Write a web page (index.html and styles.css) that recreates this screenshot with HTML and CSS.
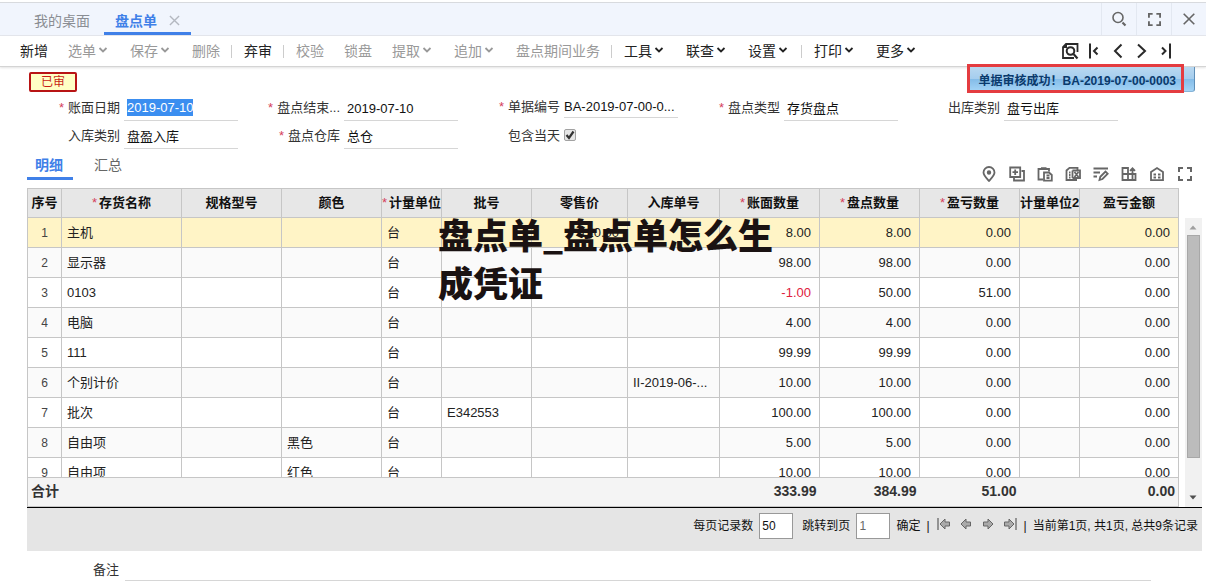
FILE: index.html
```html
<!DOCTYPE html>
<html lang="zh-CN">
<head>
<meta charset="utf-8">
<title>盘点单</title>
<link rel="stylesheet" href="styles.css">
</head>
<body>
<svg class="defs" aria-hidden="true">
  <symbol id="chev" viewBox="0 0 10 8"><path d="M1.500 2l3.500 3.500L8.500 2" fill="none" stroke="currentColor" stroke-width="1.800"/></symbol>
  <symbol id="corners" viewBox="0 0 14 14"><path d="M1 5V1h4M9 1h4v4M13 9v4H9M5 13H1V9" fill="none" stroke="currentColor" stroke-width="2"/></symbol>
</svg>

<header class="tabbar">
  <nav class="tabs">
    <button class="tab">我的桌面</button>
    <button class="tab active">盘点单
      <svg class="tab-close" viewBox="0 0 12 12"><path d="M1 1l10 10M11 1L1 11" fill="none" stroke="currentColor" stroke-width="1.500"/></svg>
    </button>
  </nav>
  <div class="window-tools">
    <button class="wbtn" aria-label="搜索"><svg width="16" height="16" viewBox="0 0 16 16"><circle cx="7" cy="6.500" r="5" fill="none" stroke="currentColor" stroke-width="1.600"/><path d="M11.500 11.500l3 3" stroke="currentColor" stroke-width="2.200"/></svg></button>
    <button class="wbtn" aria-label="全屏"><svg width="13" height="13"><use href="#corners"/></svg></button>
    <button class="wbtn" aria-label="关闭"><svg width="12" height="12" viewBox="0 0 12 12"><path d="M.7.7l10.600 10.600M11.300.7L.7 11.300" fill="none" stroke="currentColor" stroke-width="1.600"/></svg></button>
  </div>
</header>

<div class="toolbar">
  <div class="actions">
    <button class="act">新增</button>
    <button class="act off">选单<svg class="chev"><use href="#chev"/></svg></button>
    <button class="act off">保存<svg class="chev"><use href="#chev"/></svg></button>
    <button class="act off">删除</button>
    <span class="sep"></span>
    <button class="act">弃审</button>
    <span class="sep"></span>
    <button class="act off">校验</button>
    <button class="act off">锁盘</button>
    <button class="act off">提取<svg class="chev"><use href="#chev"/></svg></button>
    <button class="act off">追加<svg class="chev"><use href="#chev"/></svg></button>
    <button class="act off">盘点期间业务</button>
    <span class="sep"></span>
    <button class="act">工具<svg class="chev"><use href="#chev"/></svg></button>
    <button class="act">联查<svg class="chev"><use href="#chev"/></svg></button>
    <button class="act">设置<svg class="chev"><use href="#chev"/></svg></button>
    <span class="sep"></span>
    <button class="act">打印<svg class="chev"><use href="#chev"/></svg></button>
    <button class="act">更多<svg class="chev"><use href="#chev"/></svg></button>
  </div>
  <div class="record-nav">
    <button aria-label="查找单据"><svg viewBox="0 0 18 18"><path d="M16.500 10V2H5L2 5v11h11" fill="none" stroke="currentColor" stroke-width="1.800"/><path d="M1.500 6L6 1.500V6z" fill="currentColor"/><circle cx="9.500" cy="9" r="3.800" fill="none" stroke="currentColor" stroke-width="2"/><path d="M12.500 12l4 4.500" stroke="currentColor" stroke-width="2.200"/></svg></button>
    <button aria-label="第一张"><svg viewBox="0 0 18 18"><path d="M5 1.500v15M12.500 5.500L9 9l3.500 3.500" fill="none" stroke="currentColor" stroke-width="2"/></svg></button>
    <button aria-label="上一张"><svg viewBox="0 0 18 18"><path d="M12.500 2.500L6 9l6.500 6.500" fill="none" stroke="currentColor" stroke-width="2"/></svg></button>
    <button aria-label="下一张"><svg viewBox="0 0 18 18"><path d="M5 2.500L12 9l-7 6.500" fill="none" stroke="currentColor" stroke-width="2"/></svg></button>
    <button aria-label="最后一张"><svg viewBox="0 0 18 18"><path d="M13 1.500v15M5 5.500L8.500 9L5 12.500" fill="none" stroke="currentColor" stroke-width="2"/></svg></button>
  </div>
</div>

<main>
  <div class="status-row">
    <span class="badge">已审</span>
    <div class="toast-wrap"><div class="toast" role="status">单据审核成功<span class="mark">！</span>BA-2019-07-00-0003</div></div>
  </div>

  <form class="fields">
    <div class="field"><label for="f1"><i>*</i>账面日期</label><span class="line"><input id="f1" class="selected" value="2019-07-10"></span></div>
    <div class="field"><label for="f2"><i>*</i>盘点结束...</label><span class="line"><input id="f2" value="2019-07-10"></span></div>
    <div class="field raised"><label for="f3"><i>*</i>单据编号</label><span class="line flush"><input id="f3" value="BA-2019-07-00-0..."></span></div>
    <div class="field"><label for="f4"><i>*</i>盘点类型</label><span class="line"><input id="f4" value="存货盘点"></span></div>
    <div class="field"><label for="f5">出库类别</label><span class="line"><input id="f5" value="盘亏出库"></span></div>
    <div class="field"><label for="f6">入库类别</label><span class="line"><input id="f6" value="盘盈入库"></span></div>
    <div class="field"><label for="f7"><i>*</i>盘点仓库</label><span class="line"><input id="f7" value="总仓"></span></div>
    <div class="field"><label for="f8">包含当天</label><span class="check"><input id="f8" type="checkbox" checked><svg viewBox="0 0 12 12"><path d="M2.500 6l2.500 3 4.500-6.500" fill="none" stroke="#333" stroke-width="2.200"/></svg></span></div>
  </form>

  <div class="detail-bar">
    <nav class="subtabs">
      <button class="subtab active">明细</button>
      <button class="subtab">汇总</button>
    </nav>
    <div class="grid-tools">
      <button aria-label="定位"><svg viewBox="0 0 16 16"><path d="M8 15C5 11.500 2.500 9.200 2.500 6.500a5.500 5.500 0 0 1 11 0C13.500 9.200 11 11.500 8 15z"/><circle cx="8" cy="6.500" r="1.300" fill="currentColor"/></svg></button>
      <button aria-label="插行"><svg viewBox="0 0 16 16"><path d="M1.200 1.500h10v9.500h-10zM6.200 3.500v5.500M3.500 6.200H9"/><path d="M12.500 5H15v9.500H5V12"/></svg></button>
      <button aria-label="粘贴"><svg viewBox="0 0 16 16"><path d="M6 13.500H1.500V3H12v2.500M4 2.200h5.500"/><path d="M7 6.500h5l2.800 2.500v5.700H7zM9.500 9.500h3M9.500 12h3"/></svg></button>
      <button aria-label="删行"><svg viewBox="0 0 16 16"><path d="M12 14H1.500V4.500l3-2.700H12.500V4M4 6.500h1.500M4 9h1.500M4 11.500h1.500M7.500 4.500v7.500"/><path d="M7.500 4.500H15V12H7.500M9.500 6l4 5M13.500 6l-4 5"/></svg></button>
      <button aria-label="批改"><svg viewBox="0 0 16 16"><path d="M.5 2.500H15M.5 6.500H7M.5 10.500H4"/><path d="M6.500 14l.8-3.200L12.500 5.500l2.200 2.200-5.200 5.300z"/></svg></button>
      <button aria-label="栏目设置"><svg viewBox="0 0 16 16"><path d="M1.500 2H7v6H1.500zM1.500 8v6h13V8H7v6M11.500 14V2.500M9 4.800l2.500-2.500L14 4.800"/></svg></button>
      <button aria-label="仓库"><svg viewBox="0 0 16 16"><path d="M2 14.200V6l6-4 6 4v8.200z"/><path d="M4.500 8.500H7M9 8.500h2.500M4.500 11.500H7M9 11.500h2.500"/></svg></button>
      <button aria-label="最大化"><svg viewBox="-1 -1 16 16"><use href="#corners" width="14" height="14"/></svg></button>
    </div>
  </div>

  <section class="grid-box">
    <div class="grid-row">
      <div class="tables">
        <div class="viewport">
          <table class="grid">
            <colgroup><col class="w34"><col class="w120"><col class="w100"><col class="w100"><col class="w60"><col class="w90"><col class="w96"><col class="w92"><col class="w100"><col class="w100"><col class="w100"><col class="w60"><col class="w99"></colgroup>
            <thead><tr><th>序号</th><th><i>*</i>存货名称</th><th>规格型号</th><th>颜色</th><th><i>*</i>计量单位</th><th>批号</th><th>零售价</th><th>入库单号</th><th><i>*</i>账面数量</th><th><i>*</i>盘点数量</th><th><i>*</i>盈亏数量</th><th>计量单位2</th><th>盈亏金额</th></tr></thead>
            <tbody>
              <tr class="current"><td>1</td><td>主机</td><td></td><td></td><td>台</td><td></td><td class="n">120.00</td><td></td><td class="n">8.00</td><td class="n">8.00</td><td class="n">0.00</td><td></td><td class="n">0.00</td></tr>
              <tr><td>2</td><td>显示器</td><td></td><td></td><td>台</td><td></td><td></td><td></td><td class="n">98.00</td><td class="n">98.00</td><td class="n">0.00</td><td></td><td class="n">0.00</td></tr>
              <tr><td>3</td><td>0103</td><td></td><td></td><td>台</td><td></td><td></td><td></td><td class="n neg">-1.00</td><td class="n">50.00</td><td class="n">51.00</td><td></td><td class="n">0.00</td></tr>
              <tr><td>4</td><td>电脑</td><td></td><td></td><td>台</td><td></td><td></td><td></td><td class="n">4.00</td><td class="n">4.00</td><td class="n">0.00</td><td></td><td class="n">0.00</td></tr>
              <tr><td>5</td><td>111</td><td></td><td></td><td>台</td><td></td><td></td><td></td><td class="n">99.99</td><td class="n">99.99</td><td class="n">0.00</td><td></td><td class="n">0.00</td></tr>
              <tr><td>6</td><td>个别计价</td><td></td><td></td><td>台</td><td></td><td></td><td>II-2019-06-...</td><td class="n">10.00</td><td class="n">10.00</td><td class="n">0.00</td><td></td><td class="n">0.00</td></tr>
              <tr><td>7</td><td>批次</td><td></td><td></td><td>台</td><td>E342553</td><td></td><td></td><td class="n">100.00</td><td class="n">100.00</td><td class="n">0.00</td><td></td><td class="n">0.00</td></tr>
              <tr><td>8</td><td>自由项</td><td></td><td>黑色</td><td>台</td><td></td><td></td><td></td><td class="n">5.00</td><td class="n">5.00</td><td class="n">0.00</td><td></td><td class="n">0.00</td></tr>
              <tr><td>9</td><td>自由项</td><td></td><td>红色</td><td>台</td><td></td><td></td><td></td><td class="n">10.00</td><td class="n">10.00</td><td class="n">0.00</td><td></td><td class="n">0.00</td></tr>
            </tbody>
          </table>
        </div>
        <table class="totals">
          <colgroup><col class="w34"><col class="w120"><col class="w100"><col class="w100"><col class="w60"><col class="w90"><col class="w96"><col class="w92"><col class="w100"><col class="w100"><col class="w100"><col class="w60"><col class="w99"></colgroup>
          <tbody><tr><th colspan="8">合计</th><td>333.99</td><td>384.99</td><td>51.00</td><td></td><td>0.00</td></tr></tbody>
        </table>
      </div>
      <div class="scrollbar">
        <svg viewBox="0 0 16 16"><path d="M4.500 11L8 7l3.500 4z" fill="#a0a0a0"/></svg>
        <div class="thumb"></div>
        <svg viewBox="0 0 16 16"><path d="M4.500 5L8 9l3.500-4z" fill="#505050"/></svg>
      </div>
    </div>
    <div class="watermark">盘点单_盘点单怎么生成凭证</div>

    <div class="pager">
      <label for="size">每页记录数</label><input id="size" value="50">
      <label for="page" class="jump">跳转到页</label><input id="page" class="dim" value="1">
      <button class="ok">确定</button><span class="bar">|</span>
      <button class="arrow" aria-label="首页"><svg viewBox="0 0 16 14"><path d="M2 1v12" stroke="#777" stroke-width="1.500"/><path d="M4 7l5-5v3h4.500v4H9v3z" fill="#aaa" stroke="#666"/></svg></button>
      <button class="arrow" aria-label="上一页"><svg viewBox="0 0 16 14"><path d="M3 7l5-5v3h4.500v4H8v3z" fill="#aaa" stroke="#666"/></svg></button>
      <button class="arrow" aria-label="下一页"><svg viewBox="0 0 16 14"><path d="M13 7L8 2v3H3.500v4H8v3z" fill="#aaa" stroke="#666"/></svg></button>
      <button class="arrow" aria-label="末页"><svg viewBox="0 0 16 14"><path d="M14 1v12" stroke="#777" stroke-width="1.500"/><path d="M12 7L7 2v3H2.500v4H7v3z" fill="#aaa" stroke="#666"/></svg></button>
      <span class="bar">|</span><span>当前第1页, 共1页, 总共9条记录</span>
    </div>
  </section>

  <div class="remark"><label for="memo">备注</label><input id="memo"></div>
</main>
</body>
</html>
```
FILE: styles.css
```css
* { box-sizing: border-box; }
body {
  margin: 0;
  background: #fff;
  color: #333;
  font: 13px/20px "Liberation Sans", "Noto Sans CJK SC", sans-serif;
  overflow: hidden;
}
button, input { font: inherit; color: inherit; background: none; border: 0; padding: 0; margin: 0; outline: 0; }
svg { display: block; flex: none; }
i { font-style: normal; color: #d4405c; }
.defs { position: absolute; width: 0; height: 0; }

.tabbar {
  display: flex;
  justify-content: space-between;
  margin-top: 2px;
  height: 34px;
  background: #f1f5fd;
  border-top: 1px solid #d8dade;
  border-bottom: 1px solid #e3e6ec;
}
.tabs { display: flex; padding-left: 20px; font-size: 14px; }
.tab { color: #8a8d93; padding: 6px 14px 0; border-bottom: 3px solid transparent; }
.tab.active {
  display: flex;
  align-items: center;
  gap: 12px;
  padding: 6px 11px 0;
  color: #4080e8;
  font-weight: bold;
  border-bottom-color: #4080e8;
}
.tab-close { width: 11px; height: 11px; color: #b4b8c0; }
.window-tools { display: flex; color: #666; }
.wbtn { width: 35px; display: grid; place-items: center; border-left: 1px solid #e3e8f1; }

.toolbar {
  display: flex;
  justify-content: space-between;
  align-items: center;
  height: 31px;
  padding: 0 31px 0 10px;
  border-bottom: 1px solid #d4d4d4;
  box-shadow: 0 1px 2px #e4e4e4;
}
.actions { display: flex; align-items: center; font-size: 14px; white-space: nowrap; }
.act { display: flex; align-items: center; padding: 0 10px; color: #222; }
.act.off { color: #999; }
.chev { width: 12px; height: 8px; margin: 0 1px; margin-bottom: 2px; }
.sep { width: 2px; height: 13px; margin: 0 1px; border-left: 1px solid #ccc; }
.record-nav { display: flex; gap: 6px; color: #2a2a2a; }
.record-nav svg { width: 18px; height: 18px; }

.status-row { display: flex; justify-content: space-between; height: 26px; padding: 0 11px 0 29px; }
.badge {
  width: 48px;
  height: 20px;
  margin-top: 5px;
  border: 2px solid #b81414;
  border-radius: 2px;
  background: #ffffc4;
  color: #c81e14;
  font-size: 12px;
  line-height: 16px;
  text-align: center;
}
.toast-wrap { position: relative; }
.toast {
  height: 25px;
  padding: 0 18px 0 12px;
  border-radius: 0 0 3px 3px;
  border-right: 1px solid #5f8fb8;
  border-bottom: 1px solid #86b4d8;
  background: linear-gradient(#b9d8f0, #a4cdee 50%, #84bce8 51%, #a4d4f6);
  color: #0a3a6c;
  font-weight: bold;
  font-size: 12px;
  line-height: 26px;
}
.mark { font-family: "Noto Sans CJK TC", sans-serif; }
.toast-wrap::after { content: ""; position: absolute; inset: -3px 11px 0 0; border: 3px solid #e43c40; }

.fields {
  display: grid;
  grid-template-columns: repeat(5, minmax(0, 1fr));
  padding: 0 88px 0 18px;
}
.field { display: flex; align-items: center; gap: 4px; height: 28px; white-space: nowrap; }
.field label { flex: 1; text-align: right; padding-top: 2px; }
.field i { margin-right: 4px; }
.raised { padding-bottom: 3px; }
.line {
  width: 114px;
  height: 100%;
  padding: 6px 3px 0;
  border-bottom: 1px solid #d6d6d6;
  color: #111;
}
.line input { display: block; width: 100%; height: 20px; }
.line.flush { padding: 4px 0 0; }
.line .selected { width: 66px; height: 17px; background: #3b8ef0; color: #fff; }
.check { position: relative; width: 114px; }
.check input {
  appearance: none;
  display: block;
  width: 12px;
  height: 12px;
  border: 1px solid #a2a2a2;
  border-radius: 2px;
  background: #e6e6e6;
}
.check svg { position: absolute; left: 0; top: 0; width: 12px; height: 12px; pointer-events: none; }

.detail-bar { display: flex; justify-content: space-between; height: 31px; padding: 0 13px 0 27px; }
.subtabs { display: flex; gap: 13px; font-size: 14px; }
.subtab { padding: 4px 8px 0; border-bottom: 3px solid transparent; color: #666; }
.subtab.active { padding: 4px 10px 0 8px; color: #4080e8; font-weight: bold; border-bottom-color: #4080e8; }
.grid-tools { display: flex; gap: 12px; padding-top: 17px; color: #666; }
.grid-tools svg { width: 16px; height: 16px; fill: none; stroke: currentColor; stroke-width: 1.8; }

.grid-box { position: relative; margin: 8px 4px 0 27px; }
.grid-row { display: flex; height: 320px; border-bottom: 1px solid #000; }
.tables { flex: 1; min-width: 0; }
.viewport { height: 289px; overflow: hidden; }
table { width: 100%; table-layout: fixed; border-collapse: collapse; }
.w34 { width: 34px; } .w60 { width: 60px; } .w90 { width: 90px; } .w92 { width: 92px; }
.w96 { width: 96px; } .w99 { width: 99px; } .w100 { width: 100px; } .w120 { width: 120px; }
.grid th, .grid td { height: 30px; padding: 0 5px; border: 1px solid #c6c6c6; white-space: nowrap; overflow: hidden; }
.grid th { padding: 0; height: 29px; background: #e7e7e7; color: #111; }
.grid th i { font-weight: normal; margin-right: 2px; }
.grid td { color: #222; }
.grid td:first-child { text-align: center; font-size: 12px; color: #444; }
.grid .n { text-align: right; padding-right: 8px; }
.grid tr:nth-child(even) td { background: #fafafa; }
.grid .current td { background: #fff4c6; }
.grid .neg { color: #e0203c; }
.totals { background: #f4f4f4; border: 1px solid #c6c6c6; }
.totals th, .totals td { height: 29px; padding: 0 3px 2px; text-align: right; font-weight: bold; font-size: 14px; }
.totals th { text-align: left; }
.scrollbar { width: 17px; margin: 30px 0 0 6px; display: flex; flex-direction: column; background: #f1f1f1; }
.scrollbar svg { width: 16px; height: 17px; }
.thumb { flex: 1; margin: 0 2px 32px; background: #bcbcbc; border: 1px solid #a8a8a8; }

.watermark {
  position: absolute;
  left: 411px;
  top: 22px;
  width: 350px;
  color: #1a1212;
  font: 900 35px/48px "Noto Sans CJK SC", sans-serif;
}

.pager {
  display: flex;
  justify-content: flex-end;
  align-items: center;
  height: 43px;
  padding: 0 4px 8px 0;
  background: #e5e5e5;
  color: #111;
  font-size: 12px;
  white-space: nowrap;
}
.pager input { width: 34px; height: 26px; margin-left: 6px; padding-left: 2px; border: 1px solid #999; background: #fff; }
.pager .dim { color: #666; }
.jump { margin-left: 9px; }
.ok { margin-left: 6px; }
.bar { margin: 0 6px; }
.arrow { margin-right: 6px; padding-bottom: 3px; }
.arrow svg { width: 16px; height: 14px; }
.arrow + .bar { margin-left: 0; }

.remark { display: flex; align-items: center; height: 30px; margin-right: 55px; padding-left: 93px; gap: 6px; }
.remark label { padding-top: 8px; }
.remark input { flex: 1; height: 30px; border-bottom: 1px solid #d6d6d6; }
```
